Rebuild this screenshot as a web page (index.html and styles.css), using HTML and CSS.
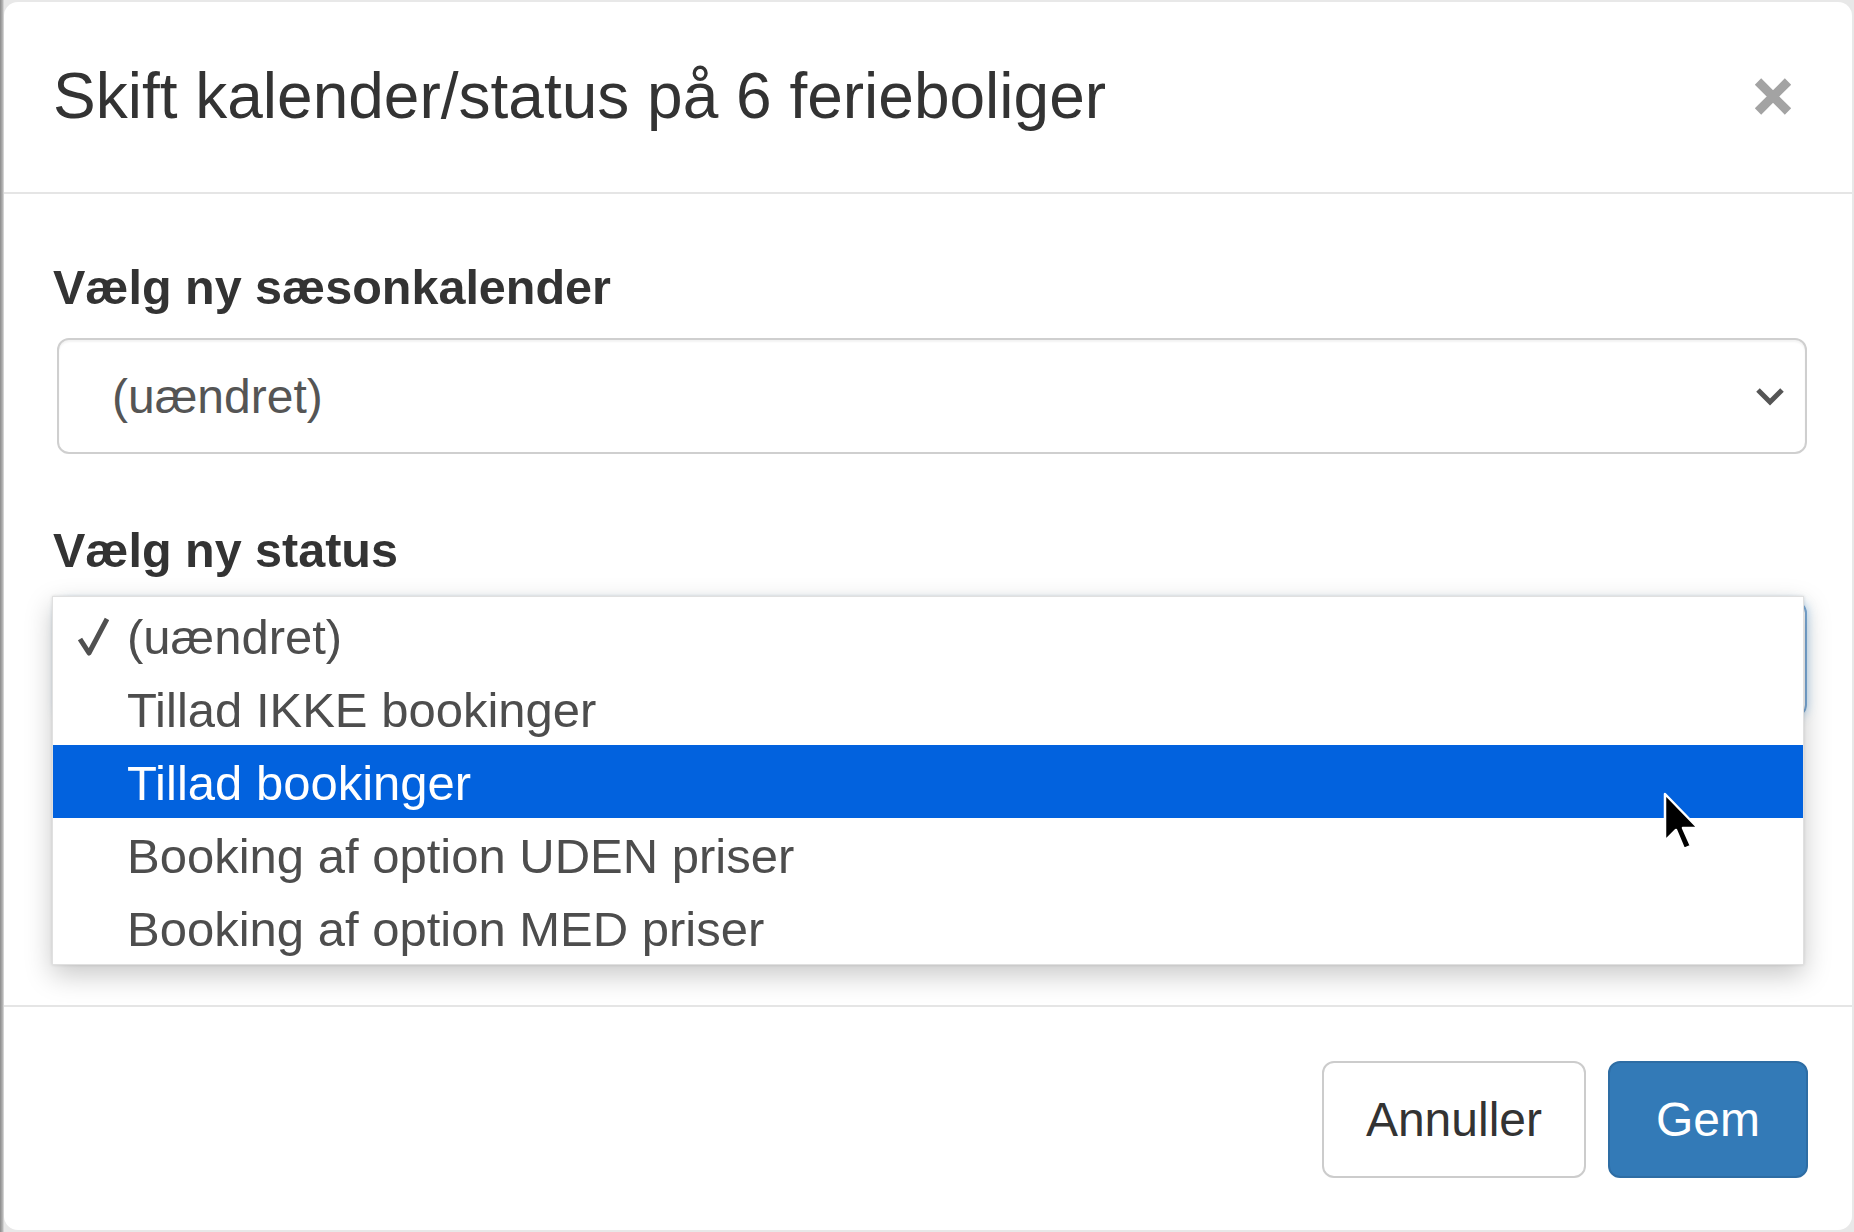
FILE: index.html
```html
<!DOCTYPE html>
<html lang="da">
<head>
<meta charset="utf-8">
<title>Skift kalender/status</title>
<link rel="stylesheet" href="styles.css">
</head>
<body>
<div class="modal">
  <div class="modal-header">
    <h4 class="modal-title">Skift kalender/status på 6 ferieboliger</h4>
    <svg class="close" width="40" height="41" viewBox="0 0 40 41"><path d="M5 5.5 L35 35.5 M35 5.5 L5 35.5" stroke="#a3a3a3" stroke-width="9" fill="none"/></svg>
  </div>
  <div class="modal-body">
    <div class="form-group">
      <label class="lbl">Vælg ny sæsonkalender</label>
      <div class="select">
        <span>(uændret)</span>
        <svg width="30" height="20" viewBox="0 0 30 20"><path d="M3 4 L15 16 L27 4" stroke="#555" stroke-width="5" fill="none"/></svg>
      </div>
    </div>
    <div class="form-group">
      <label class="lbl">Vælg ny status</label>
      <div class="select focused"></div>
    </div>
  </div>
  <div class="modal-footer">
    <button class="btn btn-default">Annuller</button>
    <button class="btn btn-primary">Gem</button>
  </div>

  <div class="popup">
    <div class="opt"><svg class="check" width="31" height="40" viewBox="0 0 31 40"><path d="M2 23 L11 37 L29 3" stroke="#505050" stroke-width="5" stroke-linejoin="round" fill="none"/></svg>(uændret)</div>
    <div class="opt">Tillad IKKE bookinger</div>
    <div class="opt active">Tillad bookinger</div>
    <div class="opt">Booking af option UDEN priser</div>
    <div class="opt">Booking af option MED priser</div>
  </div>

  <svg class="cursor" width="36" height="60" viewBox="0 0 36 60"><path d="M2 2 L2 49 L13 38 L21 57 L28 54 L20 36 L35 36 Z" fill="#000" stroke="#fff" stroke-width="2.5" stroke-linejoin="round"/></svg>
</div>
</body>
</html>
```

FILE: styles.css
```css
html, body {
  margin: 0;
  padding: 0;
  height: 100%;
  overflow: hidden;
}
body {
  background: linear-gradient(to right, #8a8a8a 0, #bcbcbc 3px, #e8e8e8 4px);
  font-family: "Liberation Sans", Arial, Helvetica, sans-serif;
}
.modal {
  position: relative;
  margin: 2px 2px 0 4px;
  height: 1228px;
  background: #fff;
  border-radius: 14px;
  display: flex;
  flex-direction: column;
  box-sizing: border-box;
}
.modal-header {
  display: flex;
  align-items: center;
  justify-content: space-between;
  padding: 49px 59px 50px 49px;
  border-bottom: 2px solid #e5e5e5;
}
.modal-title {
  margin: 0;
  font-size: 64px;
  line-height: 91px;
  font-weight: normal;
  color: #333;
}
.close {
  display: block;
}
.modal-body {
  flex: 1;
  padding: 58px 45px 0 49px;
}
.form-group {
  margin-bottom: 61px;
}
.lbl {
  display: block;
  margin: 0 0 16px;
  font-size: 48.5px;
  line-height: 70px;
  font-weight: bold;
  color: #333;
}
.select {
  box-sizing: border-box;
  margin-left: 4px;
  height: 116px;
  border: 2px solid #cfcfcf;
  border-radius: 12px;
  display: flex;
  align-items: center;
  justify-content: space-between;
  padding: 0 20px 0 53px;
  font-size: 48px;
  color: #555;
  box-shadow: inset 0 2px 2px rgba(0,0,0,.05);
}
.select svg {
  display: block;
}
.select.focused {
  border-color: #7aa9d6;
  box-shadow: 0 0 10px rgba(102,175,233,.5);
}
.modal-footer {
  display: flex;
  justify-content: flex-end;
  gap: 22px;
  padding: 54px 44px 52px;
  border-top: 2px solid #e5e5e5;
}
.btn {
  height: 117px;
  border: 2px solid #ccc;
  border-radius: 12px;
  font-family: inherit;
  font-size: 48px;
  padding: 0 42px;
  margin: 0;
}
.btn-default {
  background: #fff;
  color: #333;
}
.btn-primary {
  background: #337ab7;
  border-color: #2e6da4;
  color: #fff;
  padding: 0 46px;
}
.popup {
  position: absolute;
  left: 48px;
  top: 594px;
  width: 1752px;
  box-sizing: border-box;
  background: #fff;
  border: 1px solid rgba(0,0,0,.12);
  box-shadow: 0 10px 26px rgba(0,0,0,.22), 0 0 3px rgba(0,0,0,.12);
  padding: 2px 0 0;
}
.opt {
  position: relative;
  height: 73px;
  display: flex;
  align-items: center;
  padding-left: 74px;
  padding-top: 2px;
  box-sizing: border-box;
  font-size: 49px;
  color: #4d4d4d;
}
.opt.active {
  background: #0262de;
  color: #fff;
}
.check {
  position: absolute;
  left: 25px;
  top: 17px;
}
.cursor {
  position: absolute;
  left: 1659px;
  top: 790px;
}
```
